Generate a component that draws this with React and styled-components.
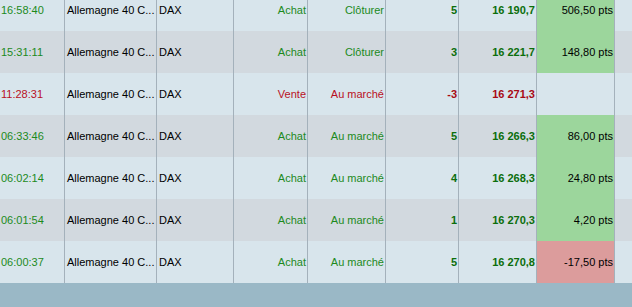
import React from "react";
import styled, { createGlobalStyle } from "styled-components";

const GlobalStyle = createGlobalStyle`
  html, body {
    margin: 0;
    padding: 0;
    height: 100%;
    background: #9ab8c6;
  }
  #root {
    height: 100%;
  }
`;

const trades = [
  { time: "16:58:40", side: "Achat", type: "Clôturer", qty: "5", price: "16 190,7", pnl: "506,50 pts" },
  { time: "15:31:11", side: "Achat", type: "Clôturer", qty: "3", price: "16 221,7", pnl: "148,80 pts" },
  { time: "11:28:31", side: "Vente", type: "Au marché", qty: "-3", price: "16 271,3", pnl: "" },
  { time: "06:33:46", side: "Achat", type: "Au marché", qty: "5", price: "16 266,3", pnl: "86,00 pts" },
  { time: "06:02:14", side: "Achat", type: "Au marché", qty: "4", price: "16 268,3", pnl: "24,80 pts" },
  { time: "06:01:54", side: "Achat", type: "Au marché", qty: "1", price: "16 270,3", pnl: "4,20 pts" },
  { time: "06:00:37", side: "Achat", type: "Au marché", qty: "5", price: "16 270,8", pnl: "-17,50 pts" },
];

const App = () => {
  return (
    <Page>
      <GlobalStyle />
      <Viewport>
        <Rows>
          {trades.map((t, i) => {
            const tone = t.side === "Vente" ? "sell" : "buy";
            const result = !t.pnl ? "none" : t.pnl.startsWith("-") ? "loss" : "gain";
            return (
              <Row key={i} $alt={i % 2 === 1}>
                <Cell $tone={tone}>{t.time}</Cell>
                <Cell>Allemagne 40 C...</Cell>
                <Cell>DAX</Cell>
                <Cell $tone={tone} $right>{t.side}</Cell>
                <Cell $tone={tone} $right>{t.type}</Cell>
                <Cell $tone={tone} $right $bold>{t.qty}</Cell>
                <Cell $tone={tone} $right $bold>{t.price}</Cell>
                <Cell $right $result={result}>{t.pnl}</Cell>
                <Cell $last />
              </Row>
            );
          })}
        </Rows>
      </Viewport>
      <Footer />
    </Page>
  );
};

const Page = styled.div`
  height: 100%;
  display: flex;
  flex-direction: column;
  font-family: "Liberation Sans", Arial, sans-serif;
  font-size: 11px;
`;

const Viewport = styled.div`
  height: 283px;
  overflow: hidden;
  flex: none;
`;

const Rows = styled.div`
  margin-top: -11px;
`;

const Row = styled.div`
  display: grid;
  grid-template-columns: 65px 92px 77px 74px 78px 73px 78px 78px 1fr;
  height: 42px;
  background: ${(p) => (p.$alt ? "#d2d9df" : "#d8e5ec")};
`;

const toneColor = {
  buy: "#1c8a1c",
  sell: "#b8101e",
};

const boldColor = {
  buy: "#0b6e0b",
  sell: "#a80a14",
};

const resultBg = {
  gain: "#9cd69c",
  loss: "#dc9c9c",
  none: "transparent",
};

const Cell = styled.div`
  display: flex;
  align-items: center;
  justify-content: ${(p) => (p.$right ? "flex-end" : "flex-start")};
  padding: ${(p) => (p.$right ? "0 1px 0 0" : "0 0 0 2px")};
  border-right: ${(p) => (p.$last ? "none" : "1px solid #a4b1bb")};
  white-space: nowrap;
  overflow: hidden;
  color: ${(p) => (p.$tone ? (p.$bold ? boldColor[p.$tone] : toneColor[p.$tone]) : "#000")};
  font-weight: ${(p) => (p.$bold ? 700 : 400)};
  background: ${(p) => (p.$result ? resultBg[p.$result] : "transparent")};
  &:first-child {
    padding-left: 1px;
  }
`;

const Footer = styled.div`
  flex: 1;
  background: #9ab8c6;
`;

export default App;
